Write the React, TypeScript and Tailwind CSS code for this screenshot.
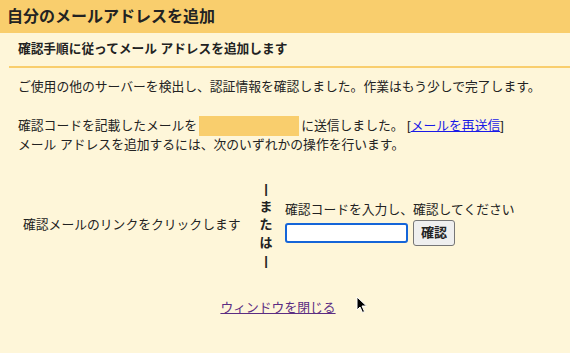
import React from 'react';

const font = "font-['Liberation_Sans','Noto_Sans_CJK_JP',sans-serif]";

const App: React.FC = () => {
  return (
    <div className={`w-[570px] h-[353px] bg-[#fef6d9] text-[#222] ${font} overflow-hidden relative`}>
      <div className="h-[33px] bg-[#f9ce6d] flex items-center px-[7px]">
        <h1 className="text-[16px] font-bold text-[#222] leading-none">自分のメールアドレスを追加</h1>
      </div>
      <div className="pl-[9px]">
        <div className="h-[35px] flex items-center pl-[9px] border-b-2 border-[#f9ce6d]">
          <h2 className="text-[12.7px] font-bold leading-none">確認手順に従ってメール アドレスを追加します</h2>
        </div>
      </div>
      <div className="px-[18px] text-[12.8px] leading-[18px]">
        <p className="mt-[10px]">ご使用の他のサーバーを検出し、認証情報を確認しました。作業はもう少しで完了します。</p>
        <p className="mt-[20px] flex items-center">
          確認コードを記載したメールを
          <span className="inline-block w-[100px] h-[20px] bg-[#f9ce6d] mx-[2px]"></span>
          に送信しました。 [<a href="#" className="text-[#1a1ae6] underline">メールを再送信</a>]
        </p>
        <p>メール アドレスを追加するには、次のいずれかの操作を行います。</p>
      </div>
      <div className="flex items-center mt-[26px] text-[12.8px]">
        <div className="w-[256px] pl-[23px]">確認メールのリンクをクリックします</div>
        <div className="flex flex-col items-center w-[20px] font-bold text-[13px] leading-[18px]">
          <span className="h-[18px]">|</span>
          <span className="h-[18px]">ま</span>
          <span className="h-[18px]">た</span>
          <span className="h-[18px]">は</span>
          <span className="h-[18px]">|</span>
        </div>
        <div className="pl-[9px] mt-[-4px]">
          <div className="leading-[18px] mb-[1px]">確認コードを入力し、確認してください</div>
          <div className="flex items-center gap-[5px]">
            <input
              type="text"
              className="w-[123px] h-[20px] bg-white border-2 border-[#1565d8] rounded-[3px] outline-none px-1"
            />
            <button className="h-[26px] px-[7px] bg-[#efefef] border border-[#767676] rounded-[3px] text-[13px] font-bold">
              確認
            </button>
          </div>
        </div>
      </div>
      <div className="flex justify-center mt-[28px] text-[12.8px]">
        <a href="#" className="text-[#5b2d82] underline ml-[-14px]">ウィンドウを閉じる</a>
      </div>
      <svg className="absolute left-[356px] top-[296px]" width="12" height="18" viewBox="0 0 12 18">
        <path d="M1 1 L1 14 L4 11 L6.5 16.5 L8.5 15.5 L6 10 L10.5 10 Z" fill="#000" stroke="#fff" strokeWidth="1" />
      </svg>
    </div>
  );
};

export default App;
